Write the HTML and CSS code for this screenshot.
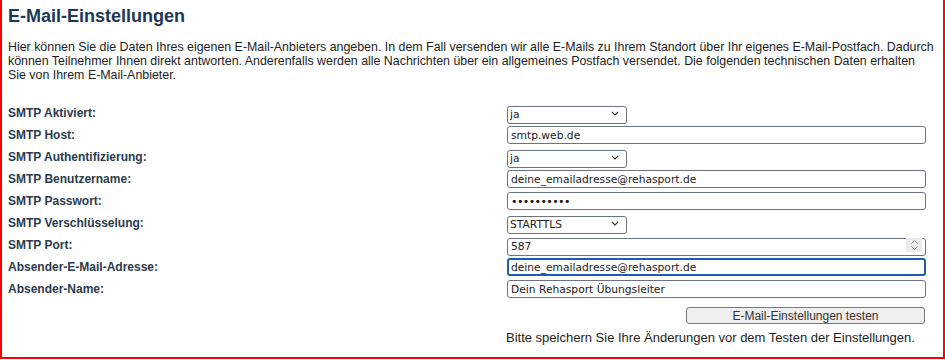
FILE: index.html
```html
<!DOCTYPE html>
<html lang="de">
<head>
  <meta charset="UTF-8">
  <title>E-Mail-Einstellungen</title>
  <link rel="stylesheet" href="styles.css">
</head>
<body>
  <div class="frame">
    <h1>E-Mail-Einstellungen</h1>
    <p class="intro">Hier können Sie die Daten Ihres eigenen E-Mail-Anbieters angeben. In dem Fall versenden wir alle E-Mails zu Ihrem Standort über Ihr eigenes E-Mail-Postfach. Dadurch<br>können Teilnehmer Ihnen direkt antworten. Anderenfalls werden alle Nachrichten über ein allgemeines Postfach versendet. Die folgenden technischen Daten erhalten<br>Sie von Ihrem E-Mail-Anbieter.</p>

    <div class="settings">
      <label class="label">SMTP Aktiviert:</label>
      <div class="select-wrap">
        <select class="field select"><option>ja</option><option>nein</option></select>
        <svg class="chevron" width="8" height="5" viewBox="0 0 8 5"><path d="M1 1 L4 4 L7 1" fill="none" stroke="#333" stroke-width="1.2"/></svg>
      </div>

      <label class="label">SMTP Host:</label>
      <input class="field" type="text" value="smtp.web.de">

      <label class="label">SMTP Authentifizierung:</label>
      <div class="select-wrap">
        <select class="field select"><option>ja</option><option>nein</option></select>
        <svg class="chevron" width="8" height="5" viewBox="0 0 8 5"><path d="M1 1 L4 4 L7 1" fill="none" stroke="#333" stroke-width="1.2"/></svg>
      </div>

      <label class="label">SMTP Benutzername:</label>
      <input class="field" type="text" value="deine_emailadresse@rehasport.de">

      <label class="label">SMTP Passwort:</label>
      <input class="field password" type="password" value="geheim1234">

      <label class="label">SMTP Verschlüsselung:</label>
      <div class="select-wrap">
        <select class="field select"><option>STARTTLS</option><option>SSL</option><option>keine</option></select>
        <svg class="chevron" width="8" height="5" viewBox="0 0 8 5"><path d="M1 1 L4 4 L7 1" fill="none" stroke="#333" stroke-width="1.2"/></svg>
      </div>

      <label class="label">SMTP Port:</label>
      <div class="number-wrap">
        <input class="field" type="text" value="587">
        <span class="spinner">
          <svg width="9" height="12" viewBox="0 0 9 12"><path d="M1.5 4.5 L4.5 1.5 L7.5 4.5 M1.5 7.5 L4.5 10.5 L7.5 7.5" fill="none" stroke="#888" stroke-width="1"/></svg>
        </span>
      </div>

      <label class="label">Absender-E-Mail-Adresse:</label>
      <input class="field focused" type="text" value="deine_emailadresse@rehasport.de">

      <label class="label">Absender-Name:</label>
      <input class="field" type="text" value="Dein Rehasport Übungsleiter">

      <span></span>
      <div class="actions">
        <button class="test-button">E-Mail-Einstellungen testen</button>
        <p class="hint">Bitte speichern Sie Ihre Änderungen vor dem Testen der Einstellungen.</p>
      </div>
    </div>
  </div>
</body>
</html>
```

FILE: styles.css
```css
:root {
  --heading: #1d3857;
  --label: #2b3b4d;
  --text: #1e1e1e;
  --field-border: #6b7480;
  --focus: #1a5fb4;
}

html, body {
  margin: 0;
  background: #fff;
}

body {
  font-family: "Liberation Sans", Arial, sans-serif;
  color: var(--text);
}

.frame {
  box-sizing: border-box;
  width: 945px;
  height: 359px;
  padding: 5px 0 0 6px;
  border: 2px solid #ff0000;
  border-top: none;
}

h1 {
  margin: 0 0 13px;
  font-size: 18px;
  line-height: 22px;
  font-weight: bold;
  color: var(--heading);
}

.intro {
  margin: 0 0 22px;
  font-size: 12.4px;
  line-height: 14px;
  white-space: nowrap;
}

.settings {
  display: grid;
  grid-template-columns: 499px 419px;
  grid-auto-rows: 18px;
  row-gap: 4px;
  align-items: center;
}

.label {
  font-size: 12px;
  font-weight: bold;
  color: var(--label);
}

.field {
  box-sizing: border-box;
  width: 419px;
  height: 18px;
  margin: 0;
  padding: 0 3px;
  border: 1px solid var(--field-border);
  border-radius: 3px;
  background: #fff;
  font-family: "DejaVu Sans", Verdana, sans-serif;
  font-size: 10.7px;
  color: #222;
  outline: none;
}

.password {
  font-size: 11px;
  letter-spacing: -0.6px;
  color: #111;
}

.focused {
  border: 2px solid var(--focus);
  padding: 0 2px;
}

.select-wrap,
.number-wrap {
  position: relative;
  height: 18px;
}

.select {
  width: 120px;
  appearance: none;
  -webkit-appearance: none;
  padding: 0 2px;
}

.chevron {
  position: absolute;
  left: 104px;
  top: 7px;
  pointer-events: none;
}

.spinner {
  position: absolute;
  right: 4px;
  top: 2px;
  width: 16px;
  height: 14px;
  background: #ececec;
  display: flex;
  align-items: center;
  justify-content: center;
}

.settings > span:empty {
  display: block;
}

.actions {
  grid-row: span 2;
  align-self: start;
  margin-top: 5px;
  margin-left: -1px;
}

.test-button {
  display: block;
  margin: 0 0 0 180px;
  width: 239px;
  height: 17px;
  padding: 0;
  border: 1px solid #7a7a7a;
  border-radius: 3px;
  background: #efefef;
  font-family: "Liberation Sans", Arial, sans-serif;
  font-size: 12px;
  color: #333;
}

.hint {
  margin: 6px 0 0;
  font-size: 13px;
  line-height: 15px;
  white-space: nowrap;
}
```
